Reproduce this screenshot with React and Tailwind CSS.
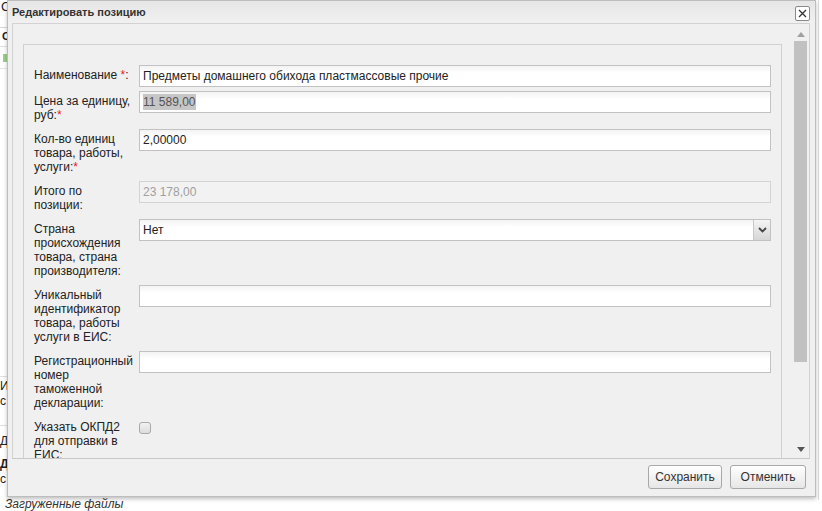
import React from "react";

const font = { fontFamily: '"Liberation Sans", Arial, sans-serif' };

const Row = ({ label, children, req }) => (
  <div className="flex items-start">
    <div className="w-[105px] shrink-0 pt-[3px] pb-[3px] text-[12px] leading-[14px] text-[#222]">
      {label}
      {req && <span className="text-[#e8192c]">*</span>}
      {req === "colon" && ":"}
    </div>
    <div className="flex-1">{children}</div>
  </div>
);

const Input = ({ value, disabled, selected }) => (
  <div
    className={
      "h-[22px] border flex items-center px-[3px] text-[12px] " +
      (disabled
        ? "border-[#d4d4d4] bg-[#f2f2f2] text-[#a0a0a0]"
        : "border-[#c2c2c2] bg-gradient-to-b from-[#f3f3f3] to-white to-[35%] text-[#222]")
    }
  >
    {selected ? <span className="bg-[#c6c6c6] text-[#555] leading-[16px]">{value}</span> : value}
  </div>
);

export default function App() {
  return (
    <div className="relative w-[822px] h-[511px] bg-white overflow-hidden text-[#222]" style={font}>
      {/* page behind the dialog, only its left edge shows */}
      <div className="absolute left-0 top-0 w-[7px] h-[495px] overflow-hidden text-[12px]">
        <div className="absolute left-[1px] top-[-3px] text-[13px]">С</div>
        <div className="absolute left-0 top-[27px] w-full border-t border-[#d8d8d8]" />
        <div className="absolute left-[2px] top-[28px] text-[11px] font-bold">О</div>
        <div className="absolute left-0 top-[46px] w-full border-t border-[#e0e0e0]" />
        <div className="absolute left-[3px] top-[54px] w-[6px] h-[8px] bg-[#9ccf8a]" />
        <div className="absolute left-0 top-[68px] w-full border-t border-[#e6e6e6]" />
        <div className="absolute left-0 top-[376px] w-full border-t border-[#e0e0e0]" />
        <div className="absolute left-0 top-[379px] leading-[15px]">И<br />с</div>
        <div className="absolute left-0 top-[425px] w-full border-t border-[#e0e0e0]" />
        <div className="absolute left-0 top-[432px]">Д</div>
        <div className="absolute left-0 top-[457px] leading-[15px]"><b>Д</b><br />с</div>
      </div>
      <div className="absolute left-[5px] top-[495px] text-[12px] italic text-[#333]">Загруженные файлы</div>
      <div className="absolute right-[3px] top-0 h-[500px] border-l border-[#dcdcdc]" />

      {/* dialog */}
      <div className="absolute left-[7px] top-0 w-[809px] h-[497px] flex flex-col border border-[#bdbdbd] bg-[#f0f0f0] shadow-[0_2px_4px_rgba(0,0,0,0.25)]">
        <div className="h-[22px] shrink-0 flex items-center justify-between pl-[4px] pr-[5px] bg-gradient-to-b from-[#e6e6e6] to-[#f1f1f1]">
          <span className="text-[11px] font-bold text-[#333]">Редактировать позицию</span>
          <div className="w-[15px] h-[15px] mt-[2px] border border-[#8a8a8a] rounded-[2px] bg-white flex items-center justify-center">
            <svg width="11" height="11" viewBox="0 0 11 11">
              <path d="M2 2 L9 9 M9 2 L2 9" stroke="#333" strokeWidth="1.3" fill="none" />
            </svg>
          </div>
        </div>

        <div className="flex-1 flex min-h-0 ml-[4px] mr-[5px] border border-[#d2d2d2] border-b-[#c8c8c8]">
          <div className="flex-1 overflow-hidden pl-[10px] pr-[10px] pt-[20px]">
            <div className="border border-[#d0d0d0] h-[520px] pl-[10px] pr-[10px] pt-[20px] flex flex-col gap-[4px]">
              <Row label="Наименование " req="colon">
                <Input value="Предметы домашнего обихода пластмассовые прочие" />
              </Row>
              <Row label={<>Цена за единицу,<br />руб:</>} req>
                <Input value="11 589,00" selected />
              </Row>
              <Row label={<>Кол-во единиц<br />товара, работы,<br />услуги:</>} req>
                <Input value="2,00000" />
              </Row>
              <Row label={<>Итого по<br />позиции:</>}>
                <Input value="23 178,00" disabled />
              </Row>
              <Row label={<>Страна<br />происхождения<br />товара, страна<br />производителя:</>}>
                <div className="h-[22px] border border-[#c2c2c2] flex text-[12px]">
                  <div className="flex-1 flex items-center px-[3px] bg-gradient-to-b from-[#f3f3f3] to-white to-[35%]">Нет</div>
                  <div className="w-[17px] border-l border-[#c8c8c8] bg-gradient-to-b from-[#f4f4f4] to-[#d6d6d6] flex items-center justify-center">
                    <svg width="9" height="6" viewBox="0 0 9 6">
                      <path d="M1 1 L4.5 4.5 L8 1" stroke="#444" strokeWidth="1.8" fill="none" />
                    </svg>
                  </div>
                </div>
              </Row>
              <Row label={<>Уникальный<br />идентификатор<br />товара, работы<br />услуги в ЕИС:</>}>
                <Input value="" />
              </Row>
              <Row label={<>Регистрационный<br />номер<br />таможенной<br />декларации:</>}>
                <Input value="" />
              </Row>
              <Row label={<>Указать ОКПД2<br />для отправки в<br />ЕИС:</>}>
                <div className="pt-[5px]">
                  <div className="w-[12px] h-[12px] rounded-[3px] border border-[#a9a9a9] bg-gradient-to-b from-[#f2f2f2] to-[#dcdcdc]" />
                </div>
              </Row>
            </div>
          </div>
          {/* scrollbar */}
          <div className="w-[17px] shrink-0 flex flex-col items-center pt-[8px] pb-[6px]">
            <svg width="8" height="5" viewBox="0 0 8 5"><path d="M0 5 L4 0 L8 5 Z" fill="#a0a0a0" /></svg>
            <div className="w-[13px] h-[321px] mt-[4px] bg-[#c1c1c1]" />
            <div className="flex-1" />
            <svg width="8" height="5" viewBox="0 0 8 5"><path d="M0 0 L4 5 L8 0 Z" fill="#555" /></svg>
          </div>
        </div>

        <div className="h-[37px] shrink-0 flex items-center justify-end gap-[8px] pr-[9px] pb-[2px]">
          <button className="w-[74px] h-[24px] rounded-[3px] border border-[#a8a8a8] bg-gradient-to-b from-white to-[#e6e6e6] text-[12px] text-[#333]">Сохранить</button>
          <button className="w-[76px] h-[24px] rounded-[3px] border border-[#a8a8a8] bg-gradient-to-b from-white to-[#e6e6e6] text-[12px] text-[#333]">Отменить</button>
        </div>
      </div>
    </div>
  );
}
